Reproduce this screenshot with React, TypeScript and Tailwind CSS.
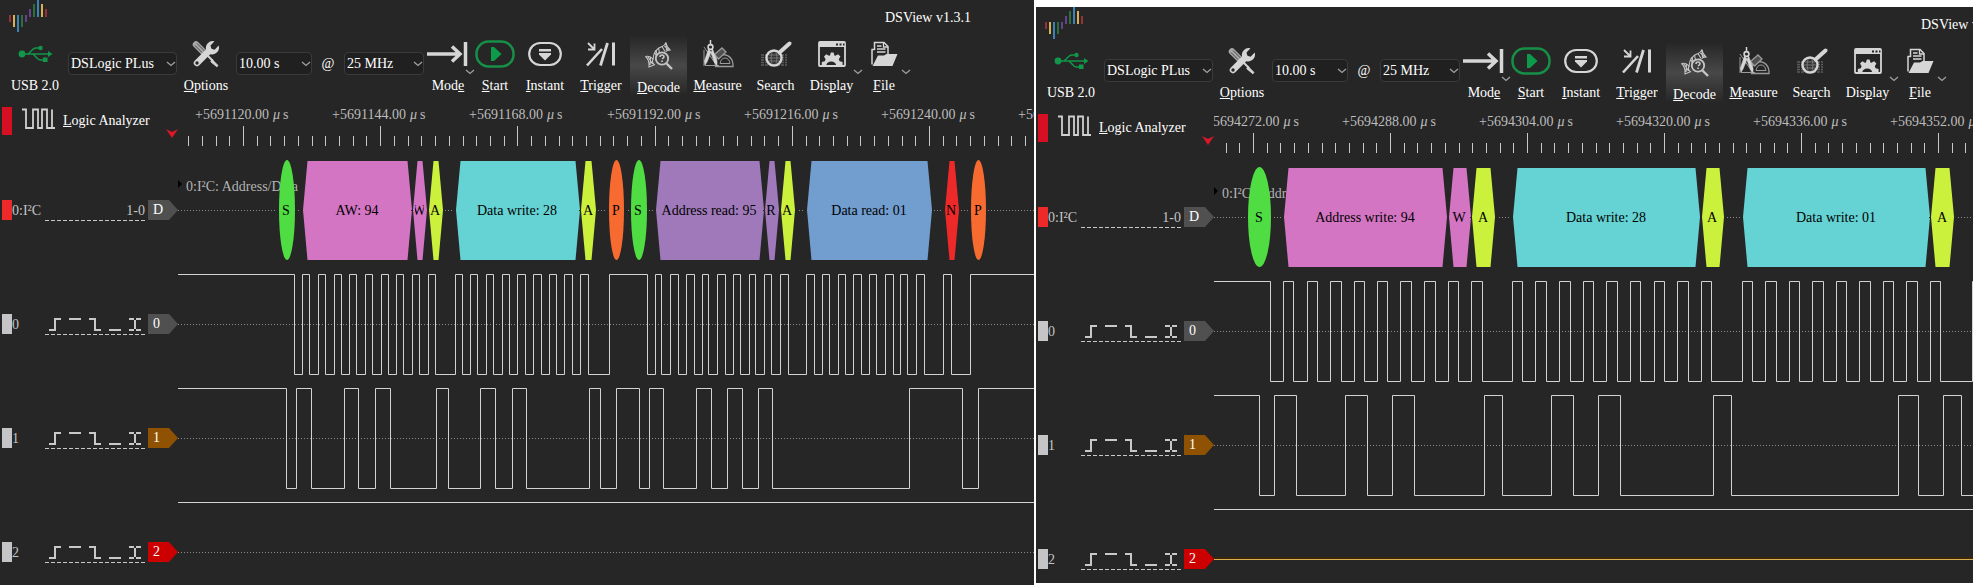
import React from "react";

type Shape = {
  kind: "hex" | "oval";
  x1: number;
  x2: number;
  color: string;
  text: string;
  clip?: boolean;
};

type Capture = {
  id: string;
  ticks: { first: number; step: number; start: number; inc: number; count: number };
  shapes: Shape[];
  clock: number[];
  data: number[];
  highlightLast: boolean;
};

const GREEN = "#4fdd43";
const PINK = "#d375c3";
const LIME = "#ccf13d";
const CYAN = "#65d2d3";
const ORANGE = "#f76b31";
const PURPLE = "#9f79b9";
const BLUE = "#719dcf";
const RED = "#ee2929";

/* Left edge of the plot area; all signal positions are measured from the pane's edge. */
const PLOT_X = 178;

const captures: Capture[] = [
  {
    id: "left",
    ticks: { first: 243, step: 137.2, start: 5691120, inc: 24, count: 7 },
    highlightLast: false,
    shapes: [
      { kind: "oval", x1: 279, x2: 295, color: GREEN, text: "S" },
      { kind: "hex", x1: 303, x2: 412, color: PINK, text: "AW: 94" },
      { kind: "hex", x1: 413, x2: 427, color: PINK, text: "W", clip: true },
      { kind: "hex", x1: 429, x2: 443, color: LIME, text: "A" },
      { kind: "hex", x1: 456, x2: 580, color: CYAN, text: "Data write: 28" },
      { kind: "hex", x1: 581, x2: 596, color: LIME, text: "A" },
      { kind: "oval", x1: 609, x2: 624, color: ORANGE, text: "P" },
      { kind: "oval", x1: 631, x2: 647, color: GREEN, text: "S" },
      { kind: "hex", x1: 656, x2: 764, color: PURPLE, text: "Address read: 95" },
      { kind: "hex", x1: 765, x2: 779, color: PURPLE, text: "R", clip: true },
      { kind: "hex", x1: 781, x2: 795, color: LIME, text: "A" },
      { kind: "hex", x1: 807, x2: 932, color: BLUE, text: "Data read: 01" },
      { kind: "hex", x1: 945, x2: 959, color: RED, text: "N", clip: true },
      { kind: "oval", x1: 971, x2: 986, color: ORANGE, text: "P" },
    ],
    clock: [
      294, 302, 309, 318, 325, 334, 341, 349, 356, 365, 372, 381, 388, 396, 403, 412, 419, 428, 435,
      455, 462, 470, 477, 486, 493, 502, 509, 517, 525, 533, 541, 549, 556, 564, 572, 580, 588, 609,
      647, 655, 661, 670, 678, 686, 694, 702, 708, 717, 725, 733, 740, 749, 755, 764, 771, 780, 788,
      806, 814, 822, 829, 838, 845, 853, 861, 869, 876, 885, 893, 900, 907, 916, 924, 943, 951, 970,
    ],
    data: [
      286, 296, 311, 344, 358, 375, 390, 436, 448, 480, 495, 512, 526, 589, 600, 616, 639, 649, 663,
      696, 711, 727, 742, 758, 772, 909, 962, 978,
    ],
  },
  {
    id: "right",
    ticks: { first: 217, step: 137, start: 5694272, inc: 16, count: 6 },
    highlightLast: true,
    shapes: [
      { kind: "oval", x1: 212, x2: 235, color: GREEN, text: "S" },
      { kind: "hex", x1: 248, x2: 411, color: PINK, text: "Address write: 94" },
      { kind: "hex", x1: 413, x2: 435, color: PINK, text: "W" },
      { kind: "hex", x1: 436, x2: 459, color: LIME, text: "A" },
      { kind: "hex", x1: 477, x2: 664, color: CYAN, text: "Data write: 28" },
      { kind: "hex", x1: 666, x2: 688, color: LIME, text: "A" },
      { kind: "hex", x1: 707, x2: 894, color: CYAN, text: "Data write: 01" },
      { kind: "hex", x1: 895, x2: 918, color: LIME, text: "A" },
    ],
    clock: [
      234, 247, 257, 271, 281, 294, 305, 318, 328, 341, 351, 364, 375, 388, 399, 412, 422, 435, 446,
      476, 486, 499, 510, 523, 534, 547, 557, 570, 581, 594, 604, 618, 628, 641, 652, 665, 675, 706,
      716, 729, 740, 753, 763, 776, 787, 800, 810, 823, 834, 847, 857, 870, 881, 894, 904, 936,
    ],
    data: [
      223, 238, 260, 309, 331, 356, 378, 448, 466, 515, 537, 562, 584, 677, 695, 862, 882, 907, 925,
    ],
  },
];

/* ---------- toolbar icons ---------- */

const INK = "#d6d6d6";

function LogoIcon() {
  const bars: [number, number, number, string][] = [
    [0, 15, 7, "#963039"],
    [4, 15, 12, "#d9b154"],
    [8, 15, 17, "#3b82b5"],
    [12, 15, 12, "#2b6f3f"],
    [16, 15, 7, "#67428c"],
    [20, 9, 8, "#67428c"],
    [24, 4, 13, "#2b6f3f"],
    [28, 0, 17, "#3b82b5"],
    [32, 4, 13, "#d9b154"],
    [36, 9, 8, "#963039"],
  ];
  return (
    <svg width="38" height="32" className="shrink-0" aria-hidden="true">
      {bars.map(([x, y, h, c]) => (
        <rect key={x} x={x} y={y} width="2" height={h} fill={c} />
      ))}
    </svg>
  );
}

function UsbIcon() {
  return (
    <svg width="36" height="28" fill="none" stroke="#12974a" strokeWidth="1.5" aria-hidden="true">
      <g transform="translate(1 0)">
        <circle cx="4" cy="14" r="3.4" fill="#12974a" stroke="none" />
        <path d="M4 14H32" />
        <path d="M30 11l4.500 3-4.500 3z" fill="#12974a" stroke="none" />
        <path d="M10 14l5.500-5.200q1-.8 2.500-.8H21M15 14l5 5q1 .9 2.500.9H26" />
        <circle cx="22.500" cy="8" r="2.200" fill="#12974a" stroke="none" />
        <rect x="25" y="17.500" width="4.500" height="4.500" fill="#12974a" stroke="none" />
      </g>
    </svg>
  );
}

function OptionsIcon() {
  return (
    <svg width="28" height="28" aria-hidden="true">
      <path d="M4 4.500L12 12.500" stroke="#a8a8a8" strokeWidth="6.500" strokeLinecap="round" />
      <path d="M3 5.500L10 12.500M5 3.500L12.500 11" stroke="#3c3c3c" strokeWidth="0.900" />
      <path d="M14 14L21 21" stroke={INK} strokeWidth="2" />
      <path d="M20 19.500l6 6-1.200 1.200-6-5z" fill={INK} stroke={INK} />
      <path d="M5 23L17 11" stroke={INK} strokeWidth="6.500" strokeLinecap="round" />
      <path
        d="M22.500 1.300a6.800 6.800 0 0 0-8.300 8.600l4.300 4.300a6.800 6.800 0 0 0 8.200-8.600l-4.100 4.100-3.200-.9-.9-3.200z"
        fill={INK}
      />
      <circle cx="5" cy="23" r="1.700" fill="#262626" />
    </svg>
  );
}

function ModeIcon() {
  return (
    <svg width="42" height="28" fill="none" stroke={INK} strokeWidth="3.500" aria-hidden="true">
      <path d="M0 14H33M25 6.500L33 14L25 21.500" />
      <path d="M38.500 2V26" />
    </svg>
  );
}

function StartIcon() {
  return (
    <svg width="40" height="28" aria-hidden="true">
      <rect x="1.500" y="1.500" width="37" height="25" rx="12" fill="none" stroke="#179047" strokeWidth="2.500" />
      <path d="M16 7h3l7.500 7-7.500 7h-3z" fill="#0b9b4a" />
    </svg>
  );
}

function InstantIcon() {
  return (
    <svg width="34" height="28" aria-hidden="true">
      <rect x="1.200" y="3" width="31.600" height="22" rx="11" fill="none" stroke={INK} strokeWidth="2.200" />
      <path d="M11 9h12v2.500H11z" fill={INK} />
      <path d="M11 13h12v1.500L17 20.500l-6-6z" fill={INK} />
    </svg>
  );
}

function TriggerIcon() {
  return (
    <svg width="30" height="28" fill="none" stroke={INK} aria-hidden="true">
      <path d="M2 3l5.500 5.500M8.500 3.500V9.500H2" strokeWidth="1.800" />
      <path d="M1 25.500L16 9" strokeWidth="2.600" />
      <path d="M14.500 25.500L21.500 3" strokeWidth="2.800" />
      <path d="M27.500 2.500V25.500" strokeWidth="3" />
    </svg>
  );
}

function DecodeIcon() {
  return (
    <svg width="30" height="28" fill="none" stroke="#c6c6c6" strokeWidth="1.100" aria-hidden="true">
      <path d="M1.500 14.500q4.500-1 7.500 2.500 1-10 9-12.500 3-1 4-4 .5 4.500 4 7.500-3 .3-4.500 1.500" />
      <path d="M1.500 14.500q4 3 3.500 10.500l6-2.500M9 17q-1.500 3 1 5.500M4 15l4.500 7M6.500 15l-.5 8" />
      <path d="M12 8l2 9M14.500 6l1 5M11 11l3 6M18 4.500l3 5M22 2l.5 6M20.500 4l4 4" />
      <circle cx="18" cy="16.500" r="6.200" fill="#404040" strokeWidth="1.800" />
      <path d="M22.500 21.500L28 27" strokeWidth="2.400" />
      <path d="M16 15q0-2 2-2t2 1.700q0 1.100-2 2.100M18 18.500v1.600" strokeWidth="1.600" />
    </svg>
  );
}

function MeasureIcon() {
  return (
    <svg width="32" height="28" fill="none" stroke="#9a9a9a" aria-hidden="true">
      <path d="M2 10v16M2 7l13 19M3 25.500h14" strokeWidth="1" />
      <path d="M13.500 26.500H31V24q-.8-8-9-9.500-6.500.5-9 6z" strokeWidth="1.300" />
      <path d="M18 23.500q1-5.500 5-5.500t5 5.500z" strokeWidth="1" />
      <path d="M12.500 14.500L20 8l4 4-7.500 7z" fill="#505050" strokeWidth="1.300" />
      <path d="M8.500 0v5" stroke={INK} strokeWidth="1.500" />
      <circle cx="8.500" cy="7" r="2.400" stroke={INK} strokeWidth="1.600" />
      <path d="M6.500 9L2.500 21l.5 4 2-3 4-10z" fill={INK} stroke={INK} strokeWidth="0.600" />
      <path d="M10.500 9l4.500 12v4.500l-2.500-3L9 13z" fill={INK} stroke={INK} strokeWidth="0.600" />
    </svg>
  );
}

function SearchIcon() {
  return (
    <svg width="34" height="28" fill="none" aria-hidden="true">
      <path
        d="M2 15h26M2 17.500h26M2 20h26M2 22.500h26M2 25h26"
        stroke="#5c5c5c"
        strokeWidth="1.300"
        strokeDasharray="3 1"
      />
      <circle cx="15" cy="18" r="7.500" fill="#333" stroke={INK} strokeWidth="2.400" />
      <path d="M9 18h12M10 15h10M10 21h10M13 12q-2 6 0 12M17 12q2 6 0 12" stroke="#7a7a7a" strokeWidth="0.900" />
      <path d="M20.500 12.500L30.500 3.500" stroke={INK} strokeWidth="4" strokeLinecap="round" />
    </svg>
  );
}

function DisplayIcon() {
  return (
    <svg width="28" height="28" aria-hidden="true">
      <rect x="1" y="2" width="26" height="24" rx="1" fill="none" stroke={INK} strokeWidth="1.800" />
      <path d="M1 2h26v5H1z" fill={INK} />
      <path d="M18 3.500h2v2h-2zM21.500 3.500h2v2h-2zM25 3.500h1.500v2H25z" fill="#262626" />
      <path
        d="M5 25v-3l3-.8.8-2-1.600-2.700 2.300-2.200 2.700 1.500 1-.4.800-2.900h2.800l.8 2.900 1 .4 2.700-1.500 2.300 2.200-1.600 2.700.8 2 3 .8v3h-6.500a5 4.500 0 0 0-9.800 0z"
        transform="translate(-1.200 0)"
        fill={INK}
      />
    </svg>
  );
}

function FileIcon() {
  return (
    <svg width="28" height="28" fill="none" stroke={INK} aria-hidden="true">
      <path d="M4.500 10V2.500H14L18 6.500V14" strokeWidth="1.500" />
      <path d="M13.500 2.500V7H18M7 6h4.500M7 9h8.500M7 12h8.500" strokeWidth="1.300" />
      <path d="M4.500 9.500H2V24.500" strokeWidth="1.500" />
      <path d="M2.500 26L8 15.500h6l2.500-1.500H27.500L22.500 26z" fill={INK} stroke="none" />
    </svg>
  );
}

function Chevron() {
  return (
    <svg width="10" height="6" fill="none" stroke="#a0a0a0" strokeWidth="1.300" aria-hidden="true">
      <path d="M1 1l4 3.500L9 1" />
    </svg>
  );
}

/* ---------- toolbar ---------- */

function Mnemonic({ text, at }: { text: string; at: number }) {
  if (at < 0) return <>{text}</>;
  return (
    <>
      {text.slice(0, at)}
      <span className="underline decoration-1 underline-offset-1 [text-decoration-skip-ink:none]">
        {text[at]}
      </span>
      {text.slice(at + 1)}
    </>
  );
}

type ToolProps = {
  label: string;
  at: number;
  className: string;
  icon: React.ReactNode;
  menu?: boolean;
};

function Tool({ label, at, className, icon, menu }: ToolProps) {
  return (
    <button
      type="button"
      className={`relative flex h-full shrink-0 flex-col items-center gap-2 ${className}`}
    >
      <span className="flex h-7 items-center">{icon}</span>
      <span className="leading-5">
        <Mnemonic text={label} at={at} />
      </span>
      {menu && (
        <span className="absolute -right-[3px] top-[34px]">
          <Chevron />
        </span>
      )}
    </button>
  );
}

function Picker({ label, value, className }: { label: string; value: string; className: string }) {
  return (
    <span className={`relative mt-[17px] shrink-0 ${className}`}>
      <select
        aria-label={label}
        defaultValue={value}
        className="h-[23px] w-full appearance-none rounded-sm border border-[#3a3a3a] bg-[#202020] px-0.5 text-white"
      >
        <option>{value}</option>
      </select>
      <span className="pointer-events-none absolute right-[1px] top-[9px]">
        <Chevron />
      </span>
    </span>
  );
}

function Toolbar() {
  return (
    <div className="flex h-[61px] shrink-0 items-start pl-1.5">
      <Tool label="USB 2.0" at={-1} className="w-[58px] pt-[5px]" icon={<UsbIcon />} />
      <Picker label="Device" value="DSLogic PLus" className="ml-1 w-[109px]" />
      <Tool label="Options" at={0} className="ml-1 w-[50px] pt-[5px]" icon={<OptionsIcon />} />
      <Picker label="Duration" value="10.00 s" className="ml-[5px] w-[76px]" />
      <span className="mt-[19px] w-8 shrink-0 text-center leading-[20px]">@</span>
      <Picker label="Sample rate" value="25 MHz" className="w-20" />
      <Tool label="Mode" at={3} className="w-[48px] pt-[5px]" icon={<ModeIcon />} menu />
      <Tool label="Start" at={0} className="w-[46px] pt-[5px]" icon={<StartIcon />} />
      <Tool label="Instant" at={0} className="w-[54px] pt-[5px]" icon={<InstantIcon />} />
      <Tool label="Trigger" at={0} className="w-[58px] pt-[5px]" icon={<TriggerIcon />} />
      <Tool
        label="Decode"
        at={0}
        className="w-[57px] bg-linear-to-b from-[#262626] via-[#484848] to-[#262626] pt-[7px]"
        icon={<DecodeIcon />}
      />
      <Tool label="Measure" at={0} className="w-[61px] pt-[5px]" icon={<MeasureIcon />} />
      <Tool label="Search" at={3} className="w-[55px] pt-[5px]" icon={<SearchIcon />} />
      <Tool label="Display" at={3} className="w-[57px] pt-[5px]" icon={<DisplayIcon />} menu />
      <Tool label="File" at={0} className="w-[48px] pt-[5px]" icon={<FileIcon />} menu />
    </div>
  );
}

/* ---------- ruler ---------- */

function Ruler({ ticks }: { ticks: Capture["ticks"] }) {
  const marks: number[] = [];
  for (let k = -6; k < 70; k++) marks.push(k);
  return (
    <svg className="h-full min-w-0 flex-1" role="img" aria-label="Time ruler">
      <g transform={`translate(${-PLOT_X} 0)`}>
        {marks.map((k) => {
          const x = Math.round(ticks.first + (k * ticks.step) / 10);
          const major = k % 10 === 0;
          return x > PLOT_X ? (
            <rect key={k} x={x} y={major ? 30 : 40} width="1" height={major ? 20 : 10} fill="#c8c8c8" />
          ) : null;
        })}
        {Array.from({ length: ticks.count }, (_, i) => (
          <text key={i} x={Math.round(ticks.first + i * ticks.step) - 48} y="23" fill="#bdbdbd">
            {`+${ticks.start + i * ticks.inc}.00`}
            <tspan dx="4" fontStyle="italic">
              μ
            </tspan>
            <tspan dx="3">s</tspan>
          </text>
        ))}
      </g>
    </svg>
  );
}

function RulerRow({ ticks }: { ticks: Capture["ticks"] }) {
  return (
    <div className="flex h-[57px] shrink-0">
      <div className="flex w-[178px] shrink-0 items-start pl-0.5">
        <span className="mt-[11px] h-7 w-2.5 bg-[#d60f22]" />
        <svg
          width="33"
          height="22"
          className="ml-2.5 mt-3"
          fill="none"
          stroke="#d0d0d0"
          strokeWidth="1.800"
          aria-hidden="true"
        >
          <path d="M0 1.500H4V20H11V1.500H16V20H20V1.500H25V20H30V1.500M30 20H33" />
        </svg>
        <button type="button" className="ml-2 mt-4 leading-[18px]">
          <Mnemonic text="Logic Analyzer" at={0} />
        </button>
        <svg width="12" height="9" className="ml-auto mt-[33px]" aria-hidden="true">
          <path d="M0 0l6 3 6-3-6 9z" fill="#dd1629" />
        </svg>
      </div>
      <Ruler ticks={ticks} />
    </div>
  );
}

/* ---------- lanes ---------- */

function TriggerModes() {
  return (
    <svg width="92" height="13" fill="#c8c8c8" aria-hidden="true">
      <path d="M0 11h5V0h7v2H7v11H0z" />
      <path d="M20 0h12v2H20z" />
      <path d="M40 0h7v11h5v2h-7V2h-5z" />
      <path d="M60 11h12v2H60z" />
      <path d="M80 0h5v2h2V0h5v2h-5v9h5v2h-5v-2h-2v2h-5v-2h5V2h-5z" />
    </svg>
  );
}

type LaneProps = {
  name: React.ReactNode;
  tag: string;
  marker: string;
  tagColor: string;
  label: string;
  detail: React.ReactNode;
  children: React.ReactNode;
};

function Lane({ name, tag, marker, tagColor, label, detail, children }: LaneProps) {
  return (
    <div className="flex h-[114px] shrink-0">
      <div className="flex w-[178px] shrink-0 items-center pl-0.5 text-[#c4c4c4]">
        <span className={`h-5 w-2.5 shrink-0 ${marker}`} />
        <span className="w-[33px] shrink-0 whitespace-nowrap">{name}</span>
        <div className="relative flex h-5 w-[100px] shrink-0 items-center justify-end">
          {detail}
          <svg className="absolute left-0 top-5 h-px w-full" aria-hidden="true">
            <path d="M0 .5H100" stroke="#c8c8c8" strokeDasharray="4 2" />
          </svg>
        </div>
        <button
          type="button"
          aria-label={`Channel ${tag}`}
          className={`ml-[3px] h-5 w-[30px] pl-[5px] text-left leading-[20px] text-white [clip-path:polygon(0_0,70%_0,100%_50%,70%_100%,0_100%)] ${tagColor}`}
        >
          {tag}
        </button>
      </div>
      <svg className="h-full min-w-0 flex-1" role="img" aria-label={label}>
        <g transform={`translate(${-PLOT_X} 0)`}>{children}</g>
      </svg>
    </div>
  );
}

function wavePath(edges: number[]) {
  let high = true;
  let d = `M${PLOT_X} 7.5`;
  for (const x of edges) {
    high = !high;
    d += `H${x + 0.5}V${high ? 7.5 : 107.5}`;
  }
  return `${d}H4000`;
}

function CentreLine() {
  return <path d={`M${PLOT_X} 57.5H4000`} stroke="#8a8a8a" strokeDasharray="1 2" />;
}

function Wave({ edges }: { edges: number[] }) {
  return (
    <>
      <CentreLine />
      <path d={wavePath(edges)} fill="none" stroke="#d2d2d2" />
    </>
  );
}

function Annotation({ shape, id }: { shape: Shape; id: string }) {
  const { x1, x2, color, text, kind, clip } = shape;
  const mid = (x1 + x2) / 2;
  return (
    <g>
      <rect x={x1 - 2} y="57" width={x2 - x1 + 4} height="1" fill="#262626" />
      {kind === "oval" ? (
        <ellipse cx={mid} cy="57" rx={(x2 - x1) / 2} ry="50" fill={color} />
      ) : (
        <path d={`M${x1} 57L${x1 + 4.5} 8H${x2 - 4.5}L${x2} 57L${x2 - 4.5} 107H${x1 + 4.5}Z`} fill={color} />
      )}
      {clip && (
        <clipPath id={id}>
          <rect x={x1 + 2} y="40" width={x2 - x1 - 5} height="40" />
        </clipPath>
      )}
      <text
        x={Math.round(mid) - 1}
        y="62"
        textAnchor="middle"
        fill="#000"
        clipPath={clip ? `url(#${id})` : undefined}
      >
        {text}
      </text>
    </g>
  );
}

function Pane({ capture, className }: { capture: Capture; className: string }) {
  return (
    <section className={`flex min-w-0 flex-col overflow-hidden bg-[#262626] ${className}`}>
      <header className="flex h-[35px] shrink-0 items-start whitespace-nowrap pl-[9px]">
        <LogoIcon />
        <h1 className="ml-[838px] mt-[9px] shrink-0 leading-[18px]">DSView v1.3.1</h1>
      </header>
      <Toolbar />
      <RulerRow ticks={capture.ticks} />
      <Lane
        name="0:I²C"
        tag="D"
        marker="bg-[#ee2929]"
        tagColor="bg-[#505050]"
        label="I2C decoder"
        detail="1-0"
      >
        <CentreLine />
        <path d="M178 27l4 4-4 4z" fill="#000" />
        <text x="186" y="38" fill="#b4b4b4">
          0:I²C: Address/Data
        </text>
        {capture.shapes.map((s) => (
          <Annotation key={s.x1} shape={s} id={`${capture.id}-${s.x1}`} />
        ))}
      </Lane>
      <Lane
        name="0"
        tag="0"
        marker="bg-[#c5c5c7]"
        tagColor="bg-[#505050]"
        label="Channel 0 signal"
        detail={<span className="pr-1"><TriggerModes /></span>}
      >
        <Wave edges={capture.clock} />
      </Lane>
      <Lane
        name="1"
        tag="1"
        marker="bg-[#c5c5c7]"
        tagColor="bg-[#8f5202]"
        label="Channel 1 signal"
        detail={<span className="pr-1"><TriggerModes /></span>}
      >
        <Wave edges={capture.data} />
      </Lane>
      <Lane
        name="2"
        tag="2"
        marker="bg-[#c5c5c7]"
        tagColor="bg-[#cc0000]"
        label="Channel 2 signal"
        detail={<span className="pr-1"><TriggerModes /></span>}
      >
        <Wave edges={[]} />
        {capture.highlightLast && (
          <>
            <path d={`M${PLOT_X} 56H4000`} stroke="#3d2608" strokeWidth="2" />
            <path d={`M${PLOT_X} 57.5H4000`} stroke="#d9b154" />
          </>
        )}
      </Lane>
    </section>
  );
}

export default function App() {
  return (
    <main className="grid h-screen grid-cols-[1034fr_937fr] gap-x-0.5 overflow-hidden bg-white font-['Liberation_Serif',serif] text-[14px] text-white">
      <Pane capture={captures[0]} className="" />
      <Pane capture={captures[1]} className="mb-0.5 mt-[7px]" />
    </main>
  );
}
